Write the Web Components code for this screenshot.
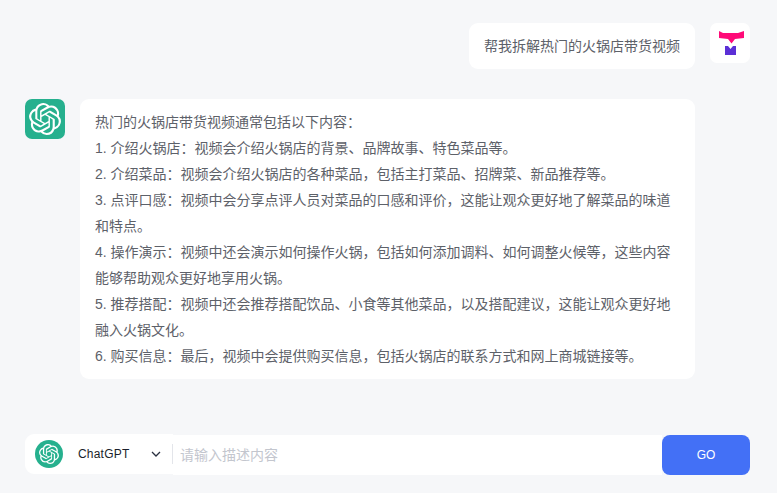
<!DOCTYPE html>
<html lang="zh">
<head>
<meta charset="utf-8">
<title>ChatGPT</title>
<style>
    html, body {
        margin: 0;
        height: 100%;
        background: #f6f7f9;
        font-family: "Liberation Sans", "Noto Sans CJK SC", sans-serif;
    }
</style>
</head>
<body>

<chat-page>
    <chat-message role="user">帮我拆解热门的火锅店带货视频</chat-message>
    <chat-message role="bot">
        <p>热门的火锅店带货视频通常包括以下内容&#xFF1A;</p>
        <p>1. 介绍火锅店&#xFF1A;视频会介绍火锅店的背景、品牌故事、特色菜品等。</p>
        <p>2. 介绍菜品&#xFF1A;视频会介绍火锅店的各种菜品&#xFF0C;包括主打菜品、招牌菜、新品推荐等。</p>
        <p>3. 点评口感&#xFF1A;视频中会分享点评人员对菜品的口感和评价&#xFF0C;这能让观众更好地了解菜品的味道和特点。</p>
        <p>4. 操作演示&#xFF1A;视频中还会演示如何操作火锅&#xFF0C;包括如何添加调料、如何调整火候等&#xFF0C;这些内容能够帮助观众更好地享用火锅。</p>
        <p>5. 推荐搭配&#xFF1A;视频中还会推荐搭配饮品、小食等其他菜品&#xFF0C;以及搭配建议&#xFF0C;这能让观众更好地融入火锅文化。</p>
        <p>6. 购买信息&#xFF1A;最后&#xFF0C;视频中会提供购买信息&#xFF0C;包括火锅店的联系方式和网上商城链接等。</p>
    </chat-message>
    <chat-composer slot="composer"></chat-composer>
</chat-page>

<script>
    const OPENAI_PATH = 'M22.2819 9.8211a5.9847 5.9847 0 0 0-.5157-4.9108 6.0462 6.0462 0 0 0-6.5098-2.9A6.0651 6.0651 0 0 0 4.9807 4.1818a5.9847 5.9847 0 0 0-3.9977 2.9 6.0462 6.0462 0 0 0 .7427 7.0966 5.98 5.98 0 0 0 .511 4.9107 6.051 6.051 0 0 0 6.5146 2.9001A5.9847 5.9847 0 0 0 13.2599 24a6.0557 6.0557 0 0 0 5.7718-4.2058 5.9894 5.9894 0 0 0 3.9977-2.9001 6.0557 6.0557 0 0 0-.7475-7.0729zm-9.022 12.6081a4.4755 4.4755 0 0 1-2.8764-1.0408l.1419-.0804 4.7783-2.7582a.7948.7948 0 0 0 .3927-.6813v-6.7369l2.02 1.1686a.071.071 0 0 1 .038.052v5.5826a4.504 4.504 0 0 1-4.4945 4.4944zm-9.6607-4.1254a4.4708 4.4708 0 0 1-.5346-3.0137l.142.0852 4.783 2.7582a.7712.7712 0 0 0 .7806 0l5.8428-3.3685v2.3324a.0804.0804 0 0 1-.0332.0615L9.74 19.9502a4.4992 4.4992 0 0 1-6.1408-1.6464zM2.3408 7.8956a4.485 4.485 0 0 1 2.3655-1.9728V11.6a.7664.7664 0 0 0 .3879.6765l5.8144 3.3543-2.0201 1.1685a.0757.0757 0 0 1-.071 0l-4.8303-2.7865A4.504 4.504 0 0 1 2.3408 7.872zm16.5963 3.8558L13.1038 8.364 15.1192 7.2a.0757.0757 0 0 1 .071 0l4.8303 2.7913a4.4944 4.4944 0 0 1-.6765 8.1042v-5.6772a.79.79 0 0 0-.407-.667zm2.0107-3.0231l-.142-.0852-4.7735-2.7818a.7759.7759 0 0 0-.7854 0L9.409 9.2297V6.8974a.0662.0662 0 0 1 .0284-.0615l4.8303-2.7866a4.4992 4.4992 0 0 1 6.6802 4.66zM8.3065 12.863l-2.02-1.1638a.0804.0804 0 0 1-.038-.0567V6.0742a4.4992 4.4992 0 0 1 7.3757-3.4537l-.142.0805L8.704 5.459a.7948.7948 0 0 0-.3927.6813zm1.0976-2.3654l2.602-1.4998 2.6069 1.4998v2.9994l-2.5974 1.4997-2.6067-1.4997Z';

    class ChatPage extends HTMLElement {
        constructor() {
            super();
            this.attachShadow({ mode: 'open' }).innerHTML = `
                <style>
                    :host {
                        display: flex;
                        flex-direction: column;
                        height: 100vh;
                        box-sizing: border-box;
                        padding: 23px 27px 18px 25px;
                    }
                    .list {
                        flex: 1;
                        display: flex;
                        flex-direction: column;
                        gap: 30px;
                    }
                </style>
                <div class="list"><slot></slot></div>
                <slot name="composer"></slot>
            `;
        }
    }

    class ChatMessage extends HTMLElement {
        constructor() {
            super();
            const isUser = this.getAttribute('role') === 'user';
            const avatar = isUser
                ? `<div class="avatar user"><svg width="40" height="40" viewBox="0 0 40 40">
                        <path fill="#ff0a78" d="M9 8l4 2h15l6-2v7l-9 1-3.500 4.500L18 16l-9-1z"/>
                        <path fill="#5b2fd6" d="M15 23h3l2.500 3 2.500-3h3v9H15z"/>
                   </svg></div>`
                : `<div class="avatar bot"><svg width="32" height="32" viewBox="0 0 24 24"><path fill="#fff" d="${OPENAI_PATH}"/></svg></div>`;
            this.attachShadow({ mode: 'open' }).innerHTML = `
                <style>
                    :host {
                        display: flex;
                        align-items: flex-start;
                        gap: 15px;
                        font-size: 14px;
                        line-height: 26px;
                        color: #5d6169;
                    }
                    :host([role="user"]) {
                        flex-direction: row-reverse;
                    }
                    .avatar {
                        flex: none;
                        width: 40px;
                        height: 40px;
                        border-radius: 7px;
                        display: flex;
                        align-items: center;
                        justify-content: center;
                    }
                    .user { background: #fff; }
                    .bot { background: #26b08e; }
                    .bubble {
                        background: #fff;
                        border-radius: 9px;
                        padding: 10px 15px;
                        width: 585px;
                    }
                    :host([role="user"]) .bubble {
                        width: auto;
                    }
                    ::slotted(p) {
                        margin: 0;
                    }
                </style>
                ${avatar}
                <div class="bubble"><slot></slot></div>
            `;
        }
    }

    class ChatComposer extends HTMLElement {
        constructor() {
            super();
            this.attachShadow({ mode: 'open' }).innerHTML = `
                <style>
                    :host {
                        display: flex;
                        align-items: flex-end;
                        height: 41px;
                    }
                    .model {
                        flex: none;
                        box-sizing: border-box;
                        width: 148px;
                        height: 40px;
                        margin-bottom: 1px;
                        padding-left: 10px;
                        background: #fff;
                        border-radius: 9px 0 0 9px;
                        display: flex;
                        align-items: center;
                    }
                    .logo {
                        flex: none;
                        width: 28px;
                        height: 28px;
                        border-radius: 50%;
                        background: #26b08e;
                        display: flex;
                        align-items: center;
                        justify-content: center;
                    }
                    .name {
                        margin-left: 15px;
                        font-size: 12px;
                        font-weight: 500;
                        letter-spacing: 0.2px;
                        color: #1a1f2b;
                        flex: 1;
                    }
                    .chevron {
                        margin-right: 11px;
                        display: block;
                    }
                    .field {
                        flex: 1;
                        height: 40px;
                        background: #fff;
                        display: flex;
                        align-items: center;
                        position: relative;
                        padding-left: 7px;
                    }
                    .field::before {
                        content: "";
                        position: absolute;
                        left: -1px;
                        top: 9px;
                        width: 1px;
                        height: 20px;
                        background: #e3e5ea;
                    }
                    input {
                        border: 0;
                        outline: 0;
                        padding: 0;
                        width: 100%;
                        background: transparent;
                        font: inherit;
                        font-size: 14px;
                    }
                    input::placeholder {
                        color: #c3c6ce;
                    }
                    button {
                        flex: none;
                        width: 88px;
                        height: 40px;
                        border: 0;
                        border-radius: 8px;
                        background: #4370f6;
                        color: #fff;
                        font: inherit;
                        font-size: 12px;
                    }
                </style>
                <div class="model">
                    <div class="logo"><svg width="20" height="20" viewBox="0 0 24 24"><path fill="#fff" d="${OPENAI_PATH}"/></svg></div>
                    <span class="name">ChatGPT</span>
                    <svg class="chevron" width="12" height="12" viewBox="0 0 12 12"><path d="M2 4l4 4 4-4" fill="none" stroke="#2a3040" stroke-width="1.300"/></svg>
                </div>
                <div class="field"><input placeholder="请输入描述内容"></div>
                <button>GO</button>
            `;
        }
    }

    customElements.define('chat-page', ChatPage);
    customElements.define('chat-message', ChatMessage);
    customElements.define('chat-composer', ChatComposer);
</script>
</body>
</html>
